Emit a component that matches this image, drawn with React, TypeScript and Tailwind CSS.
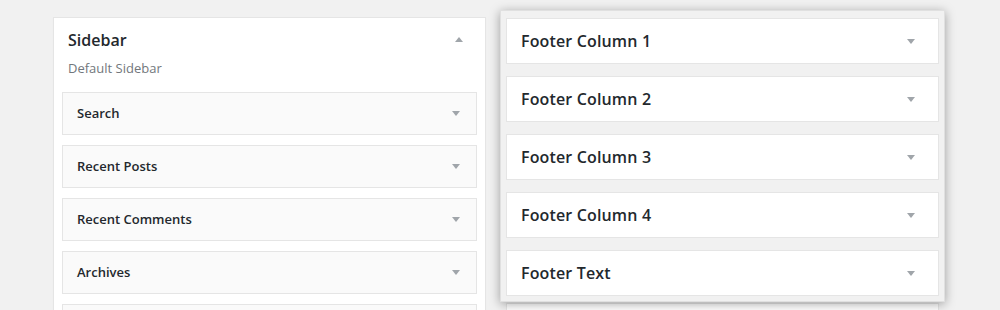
import React from "react";

const Arrow = ({ up = false }: { up?: boolean }) => (
  <svg width="8" height="5" viewBox="0 0 8 5" className="block">
    {up ? (
      <polygon points="0,5 8,5 4,0" fill="#a0a5aa" />
    ) : (
      <polygon points="0,0 8,0 4,5" fill="#a0a5aa" />
    )}
  </svg>
);

const widgets = ["Search", "Recent Posts", "Recent Comments", "Archives", ""];
const footers = ["Footer Column 1", "Footer Column 2", "Footer Column 3", "Footer Column 4", "Footer Text"];

export default function App() {
  return (
    <div
      className="w-[1000px] h-[310px] overflow-hidden bg-[#f1f1f1] flex items-start pl-[53px]"
      style={{ fontFamily: '"Open Sans", "Noto Sans", sans-serif' }}
    >
      <div className="mt-[17px] w-[433px] bg-white border border-[#e5e5e5] shadow-[0_1px_1px_rgba(0,0,0,0.04)] shrink-0">
        <div className="flex items-start justify-between pl-[14px] pr-[22px] pt-[10px]">
          <div>
            <div className="text-[16px] leading-[24px] font-semibold text-[#23282d]">Sidebar</div>
            <div className="mt-[6px] text-[13px] leading-[20px] text-[#72777c]">Default Sidebar</div>
          </div>
          <div className="mt-[9px]">
            <Arrow up />
          </div>
        </div>
        <div className="mt-[14px] px-[8px] flex flex-col gap-[10px]">
          {widgets.map((w, i) => (
            <div
              key={i}
              className="h-[43px] bg-[#fafafa] border border-[#e5e5e5] flex items-center justify-between pl-[14px] pr-[16px]"
            >
              <span className="text-[13px] font-semibold text-[#23282d]">{w}</span>
              <Arrow />
            </div>
          ))}
        </div>
      </div>
      <div className="ml-[14px] mt-[10px] w-[445px] shrink-0 flex flex-col">
        <div className="relative z-10 bg-[#f1f1f1] border border-[#e0e0e0] px-[5px] pt-[7px] pb-[5px] flex flex-col gap-[12px] shadow-[0_2px_10px_rgba(0,0,0,0.35)]">
          {footers.map((f) => (
            <div
              key={f}
              className="h-[46px] bg-white border border-[#e5e5e5] flex items-center justify-between pl-[14px] pr-[23px]"
            >
              <span className="text-[16px] font-semibold text-[#23282d] tracking-[0.15px]">{f}</span>
              <Arrow />
            </div>
          ))}
        </div>
        <div className="mx-[6px] mt-[1px] h-[40px] bg-white border border-[#e5e5e5]" />
      </div>
    </div>
  );
}
